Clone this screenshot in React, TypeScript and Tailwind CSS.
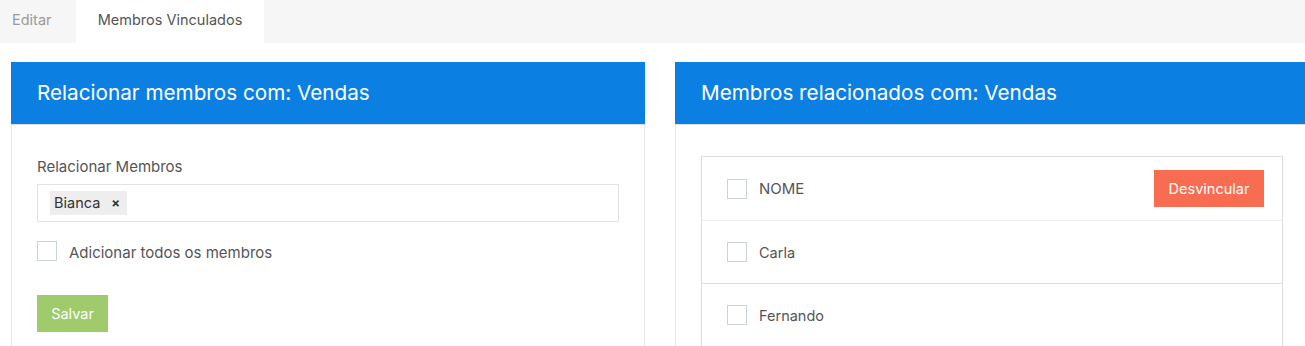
import React from "react";

function Checkbox() {
  return <span className="block w-[20px] h-[20px] border border-[#c8d3dc] bg-white shrink-0" />;
}

export default function App() {
  const rows = ["Carla", "Fernando"];
  return (
    <div className="w-[1305px] h-[346px] overflow-hidden bg-white font-['Inter','Noto_Sans',sans-serif]">
      <div className="h-[43px] bg-[#f6f6f6] flex items-stretch text-[14.5px]">
        <div className="w-[76px] pl-[12px] pb-[3px] flex items-center text-[#9a9a9a]">Editar</div>
        <div className="w-[188px] pb-[3px] flex items-center justify-center bg-white text-[#555]">Membros Vinculados</div>
      </div>
      <div className="flex gap-[30px] pl-[11px] pt-[19px]">
        <div className="w-[634px] shrink-0 flex flex-col">
          <div className="h-[62px] bg-[#0b7fe2] flex items-center pl-[26px] text-white text-[20.7px]">
            Relacionar membros com: Vendas
          </div>
          <div className="border-t border-[#dcdcdc] border-x border-x-[#e8e8e8] px-[25px] pt-[32px] pb-[20px] h-[240px]">
            <div className="text-[15px] leading-[20px] text-[#555]">Relacionar Membros</div>
            <div className="mt-[7px] h-[38px] border border-[#e3e3e3] flex items-center pl-[12px]">
              <span className="h-[24px] bg-[#eeeeee] flex items-center pl-[4px] pr-[7px] text-[14.5px] text-[#333]">
                Bianca
                <span className="ml-[11px] text-[13px] font-bold text-[#333] leading-none">×</span>
              </span>
            </div>
            <div className="mt-[19px] h-[20px] flex items-center gap-[12px]">
              <Checkbox />
              <span className="pt-[3px] text-[15px] leading-[20px] text-[#555]">Adicionar todos os membros</span>
            </div>
            <button className="mt-[34px] w-[71px] h-[37px] bg-[#9fcb6d] text-white text-[14.5px] flex items-center justify-center">
              Salvar
            </button>
          </div>
        </div>
        <div className="w-[634px] shrink-0 flex flex-col">
          <div className="h-[62px] bg-[#0b7fe2] flex items-center pl-[26px] text-white text-[20.7px]">
            Membros relacionados com: Vendas
          </div>
          <div className="border-t border-[#dcdcdc] border-x border-x-[#e8e8e8] px-[25px] pt-[31px] h-[240px]">
            <div className="border border-[#dddddd]">
              <div className="h-[64px] border-b border-[#efefef] flex items-center pl-[25px] pr-[18px]">
                <Checkbox />
                <span className="ml-[12px] pt-[2px] text-[15px] text-[#555]">NOME</span>
                <button className="ml-auto w-[110px] h-[37px] bg-[#f86c51] text-white text-[14.5px] flex items-center justify-center">
                  Desvincular
                </button>
              </div>
              {rows.map((r) => (
                <div key={r} className="h-[63px] border-b border-[#dddddd] flex items-center pl-[25px]">
                  <Checkbox />
                  <span className="ml-[12px] pt-[2px] text-[14.5px] text-[#555]">{r}</span>
                </div>
              ))}
            </div>
          </div>
        </div>
      </div>
    </div>
  );
}
